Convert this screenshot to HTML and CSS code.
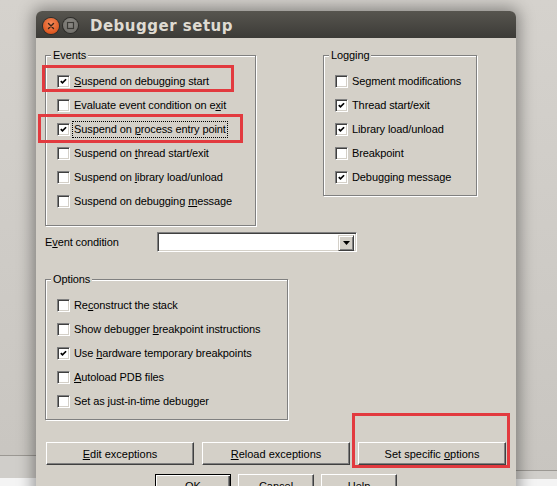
FILE: index.html
```html
<!DOCTYPE html>
<html lang="en">
<head>
    <meta charset="UTF-8">
    <title>Debugger setup</title>
    <link rel="stylesheet" href="styles.css">
</head>
<body>
<div class="desktop">
    <div class="backwin backwin-left"></div>
    <div class="backwin backwin-right"></div>

    <div class="window">
        <div class="titlebar">
            <span class="tb-btn tb-close">
                <svg width="16" height="16" viewBox="0 0 16 16"><path d="M5.5 5.5l5 5M10.5 5.5l-5 5" stroke="#3a2418" stroke-width="1.4" stroke-linecap="round"/></svg>
            </span>
            <span class="tb-btn tb-min">
                <svg width="15" height="15" viewBox="0 0 15 15"><rect x="4.5" y="4.5" width="6" height="6" fill="none" stroke="#3b3a36" stroke-width="1.2"/></svg>
            </span>
            <span class="title">Debugger setup</span>
        </div>

        <div class="dialog">
            <div class="top">
                <div class="group events">
                    <span class="group-title">Events</span>
                    <ul class="checks">
                        <li><span class="cb"><svg viewBox="0 0 9 9"><path d="M1 4l2.2 2.2L7.8 1.6" /></svg></span><span><u>S</u>uspend on debugging start</span></li>
                        <li><span class="cb"></span><span>Evaluate event condition on e<u>x</u>it</span></li>
                        <li><span class="cb"><svg viewBox="0 0 9 9"><path d="M1 4l2.2 2.2L7.8 1.6" /></svg></span><span class="focus">Suspend on <u>p</u>rocess entry point</span></li>
                        <li><span class="cb"></span><span>Suspend on <u>t</u>hread start/exit</span></li>
                        <li><span class="cb"></span><span>Suspend on <u>l</u>ibrary load/unload</span></li>
                        <li><span class="cb"></span><span>Suspend on debugging <u>m</u>essage</span></li>
                    </ul>
                </div>

                <div class="group logging">
                    <span class="group-title">Logging</span>
                    <ul class="checks">
                        <li><span class="cb"></span><span>Segment modifications</span></li>
                        <li><span class="cb"><svg viewBox="0 0 9 9"><path d="M1 4l2.2 2.2L7.8 1.6" /></svg></span><span>Thread start/exit</span></li>
                        <li><span class="cb"><svg viewBox="0 0 9 9"><path d="M1 4l2.2 2.2L7.8 1.6" /></svg></span><span>Library load/unload</span></li>
                        <li><span class="cb"></span><span>Breakpoint</span></li>
                        <li><span class="cb"><svg viewBox="0 0 9 9"><path d="M1 4l2.2 2.2L7.8 1.6" /></svg></span><span>Debugging message</span></li>
                    </ul>
                </div>
            </div>

            <div class="cond-row">
                <span class="cond-label">E<u>v</u>ent condition</span>
                <div class="combo">
                    <span class="combo-btn">
                        <svg width="7" height="4" viewBox="0 0 7 4"><path d="M0 0h7L3.5 4z" fill="#000"/></svg>
                    </span>
                </div>
            </div>

            <div class="group options">
                <span class="group-title">Options</span>
                <ul class="checks">
                    <li><span class="cb"></span><span>Re<u>c</u>onstruct the stack</span></li>
                    <li><span class="cb"></span><span>Show debugger <u>b</u>reakpoint instructions</span></li>
                    <li><span class="cb"><svg viewBox="0 0 9 9"><path d="M1 4l2.2 2.2L7.8 1.6" /></svg></span><span>Use <u>h</u>ardware temporary breakpoints</span></li>
                    <li><span class="cb"></span><span><u>A</u>utoload PDB files</span></li>
                    <li><span class="cb"></span><span>Set as just-in-time debugger</span></li>
                </ul>
            </div>

            <div class="btn-row">
                <button class="btn wide"><u>E</u>dit exceptions</button>
                <button class="btn wide"><u>R</u>eload exceptions</button>
                <button class="btn wide">Set specific <u>o</u>ptions</button>
            </div>

            <div class="btn-row ok-row">
                <button class="btn small default">OK</button>
                <button class="btn small">Cancel</button>
                <button class="btn small">Help</button>
            </div>
        </div>

        <div class="mark mark-1"></div>
        <div class="mark mark-2"></div>
        <div class="mark mark-3"></div>
    </div>
</div>
</body>
</html>
```

FILE: styles.css
```css
*,
*::before,
*::after{
    box-sizing: border-box;
}
body{
    margin: 0;
    font-family: "Liberation Sans", Arial, sans-serif;
}
.desktop{
    position: relative;
    width: 557px;
    height: 486px;
    overflow: hidden;
    background: linear-gradient(#d5d2cd, #c8c5c0);
}

/* windows behind the dialog */
.backwin{
    position: absolute;
    border-top: 1px solid #9b9893;
}
.backwin-left{
    left: 0;
    top: 455px;
    width: 80px;
    height: 40px;
    background: linear-gradient(#d0ceca 0 22px, #f4f4f4 22px);
}
.backwin-right{
    right: 0;
    top: 470px;
    width: 80px;
    height: 30px;
    background: linear-gradient(#d0ceca 0 8px, #f4f4f4 8px);
}

.window{
    position: absolute;
    left: 36px;
    top: 11px;
    width: 480px;
    height: 490px;
    display: flex;
    flex-direction: column;
    border-radius: 6px 6px 0 0;
    box-shadow: 0 0 16px 3px rgba(0, 0, 0, .38);
}
.titlebar{
    flex: none;
    height: 27px;
    padding: 2px 0 0 7px;
    display: flex;
    align-items: center;
    background: linear-gradient(#57554f, #3c3b37);
    border-radius: 6px 6px 0 0;
}
.tb-btn{
    display: flex;
    border-radius: 50%;
}
.tb-close{
    width: 16px;
    height: 16px;
    background: radial-gradient(circle at 50% 35%, #f58a5a, #e05a22 70%, #b9400f);
    box-shadow: 0 0 0 1px #2e2d2a;
}
.tb-min{
    width: 15px;
    height: 15px;
    margin-left: 4px;
    background: radial-gradient(circle at 50% 35%, #8c8a85, #6b6964);
    box-shadow: 0 0 0 1px #2e2d2a;
}
.title{
    margin-left: 12px;
    color: #dfdbd2;
    font-family: "DejaVu Sans", sans-serif;
    font-weight: bold;
    font-size: 15px;
    letter-spacing: .5px;
}

.dialog{
    flex: 1;
    background: #d4d0c8;
    padding: 17px 0 0 9px;
    font-size: 11px;
    letter-spacing: -.1px;
    color: #000;
}
.top{
    display: flex;
    align-items: flex-start;
    gap: 67px;
}

.group{
    border: 1px solid #808080;
    box-shadow: inset 1px 1px #fff, 1px 1px #fff;
}
.group-title{
    display: block;
    width: fit-content;
    margin: -7px 0 0 5px;
    padding: 0 2px;
    line-height: 13px;
    background: #d4d0c8;
}
.events{
    width: 211px;
    padding-bottom: 12px;
}
.logging{
    width: 154px;
    padding-bottom: 6px;
}
.options{
    width: 243px;
    margin-top: 27px;
    padding-bottom: 6px;
}

.checks{
    list-style: none;
    margin: 7px 0 0;
    padding: 0 0 0 11px;
}
.checks li{
    height: 24px;
    display: flex;
    align-items: center;
    gap: 4px;
    line-height: 13px;
    white-space: nowrap;
}
.cb{
    flex: none;
    width: 13px;
    height: 13px;
    padding: 2px;
    background: #fff;
    border: 1px solid;
    border-color: #808080 #fff #fff #808080;
    box-shadow: inset 1px 1px #404040, inset -1px -1px #d4d0c8;
}
.cb svg{
    display: block;
    width: 7px;
    height: 7px;
}
.cb path{
    fill: none;
    stroke: #000;
    stroke-width: 2.2;
}
.focus{
    margin-left: -2px;
    padding: 1px;
    border: 1px dotted #000;
}

.cond-row{
    margin-top: 6px;
    height: 20px;
    display: flex;
    align-items: center;
}
.cond-label{
    width: 112px;
}
.combo{
    width: 200px;
    height: 20px;
    padding: 2px;
    display: flex;
    justify-content: flex-end;
    background: #fff;
    border: 1px solid;
    border-color: #808080 #fff #fff #808080;
    box-shadow: inset 1px 1px #404040, inset -1px -1px #d4d0c8;
}
.combo-btn{
    width: 16px;
    height: 16px;
    display: flex;
    align-items: center;
    justify-content: center;
    background: #d4d0c8;
    border: 1px solid;
    border-color: #d4d0c8 #404040 #404040 #d4d0c8;
    box-shadow: inset 1px 1px #fff, inset -1px -1px #808080;
}

.btn-row{
    display: flex;
    gap: 8px;
    margin: 22px 0 0 1px;
}
.btn{
    height: 23px;
    padding: 0;
    font: inherit;
    color: #000;
    background: #d4d0c8;
    border: 1px solid;
    border-color: #fff #404040 #404040 #fff;
    box-shadow: inset -1px -1px #808080, inset 1px 1px #d4d0c8;
}
.wide{
    width: 148px;
}
.ok-row{
    margin: 9px 0 0 110px;
    gap: 7px;
}
.small{
    width: 76px;
}
.default{
    border: 1px solid #000;
    box-shadow: inset 1px 1px #fff, inset -1px -1px #404040, inset -2px -2px #808080;
}

/* red annotation boxes */
.mark{
    position: absolute;
    border: 3px solid #e23a3f;
}
.mark-1{
    left: 6px;
    top: 54px;
    width: 192px;
    height: 27px;
}
.mark-2{
    left: 2px;
    top: 103px;
    width: 205px;
    height: 29px;
}
.mark-3{
    left: 316px;
    top: 402px;
    width: 158px;
    height: 55px;
}
```
